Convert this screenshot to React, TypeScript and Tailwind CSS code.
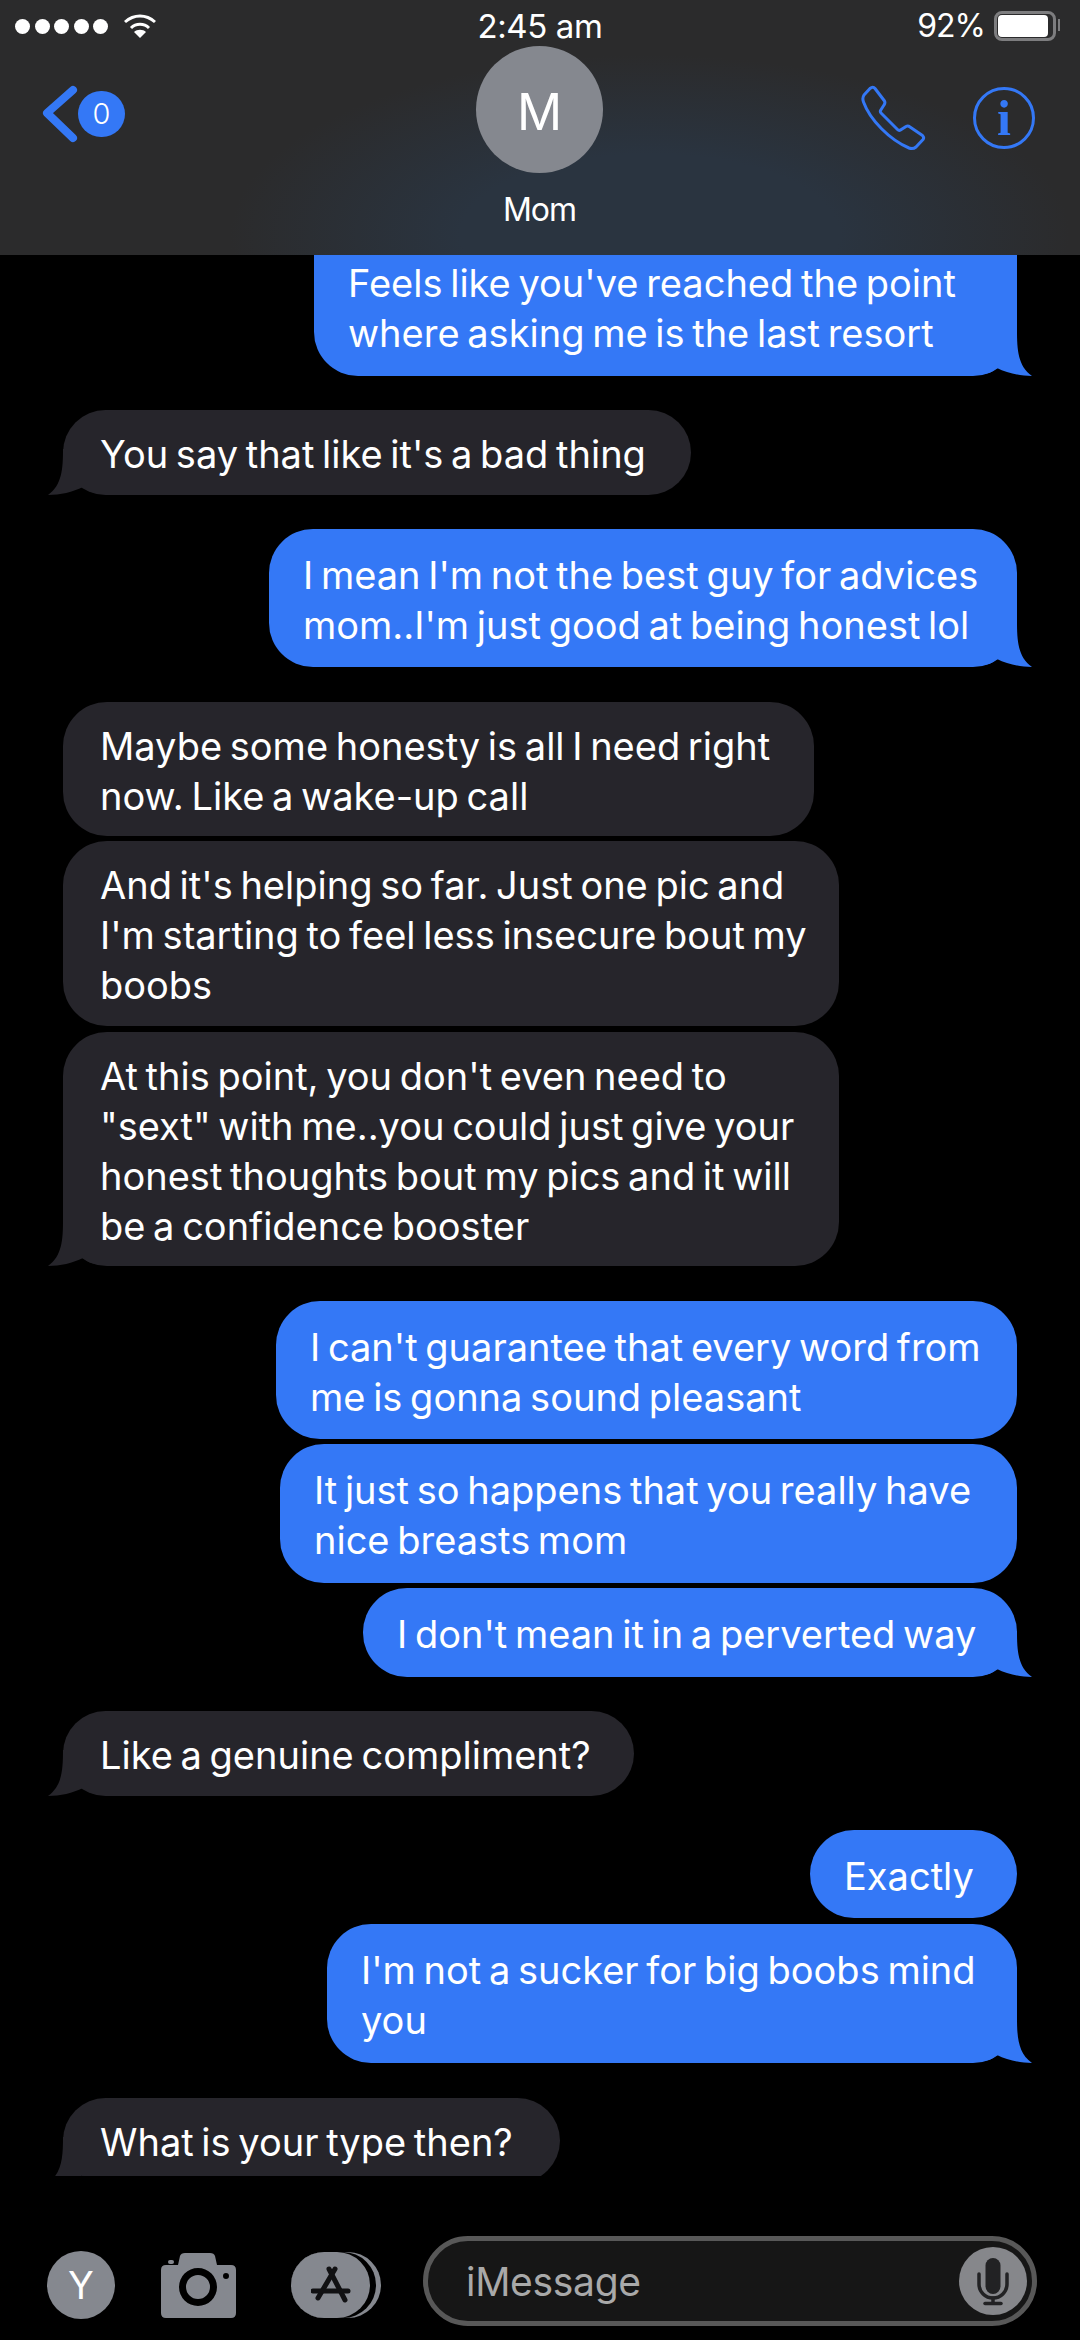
type Msg = { lines: string[]; box: string; sent?: boolean; tail?: boolean };

const messages: Msg[] = [
  { lines: ["", "Feels like you've reached the point", "where asking me is the last resort"], box: "w-[703px] h-[189px] -mt-[68px]", sent: true, tail: true },
  { lines: ["You say that like it's a bad thing"], box: "w-[628px] h-[85px] mt-[34px]", tail: true },
  { lines: ["I mean I'm not the best guy for advices", "mom..I'm just good at being honest lol"], box: "w-[748px] h-[138px] mt-[34px]", sent: true, tail: true },
  { lines: ["Maybe some honesty is all I need right", "now. Like a wake-up call"], box: "w-[751px] h-[134px] mt-[35px]" },
  { lines: ["And it's helping so far. Just one pic and", "I'm starting to feel less insecure bout my", "boobs"], box: "w-[776px] h-[185px] mt-[5px]" },
  { lines: ["At this point, you don't even need to", "\"sext\" with me..you could just give your", "honest thoughts bout my pics and it will", "be a confidence booster"], box: "w-[776px] h-[234px] mt-[6px]", tail: true },
  { lines: ["I can't guarantee that every word from", "me is gonna sound pleasant"], box: "w-[741px] h-[138px] mt-[35px]", sent: true },
  { lines: ["It just so happens that you really have", "nice breasts mom"], box: "w-[737px] h-[139px] mt-[5px]", sent: true },
  { lines: ["I don't mean it in a perverted way"], box: "w-[654px] h-[89px] mt-[5px]", sent: true, tail: true },
  { lines: ["Like a genuine compliment?"], box: "w-[571px] h-[85px] mt-[34px]", tail: true },
  { lines: ["Exactly"], box: "w-[207px] h-[88px] mt-[34px]", sent: true },
  { lines: ["I'm not a sucker for big boobs mind", "you"], box: "w-[690px] h-[139px] mt-[6px]", sent: true, tail: true },
  { lines: ["What is your type then?"], box: "w-[497px] h-[85px] mt-[35px]", tail: true },
];

function Tail({ sent }: { sent?: boolean }) {
  return (
    <svg
      viewBox="0 0 47 56"
      className={
        sent
          ? "absolute -right-[15px] bottom-0 w-[47px] h-[56px]"
          : "absolute -left-[15px] bottom-0 w-[47px] h-[56px] -scale-x-100"
      }
    >
      <path
        d="M32 10C32 30 33 46 47 56C35 56 22 53 12 48C9 51 5 53 0 54L0 10Z"
        fill={sent ? "#3478f6" : "#26252b"}
      />
    </svg>
  );
}

function Bubble({ msg }: { msg: Msg }) {
  return (
    <div
      className={`relative shrink-0 rounded-[44px] flex flex-col justify-center pt-[3px] ${msg.box} ${
        msg.sent ? "self-end bg-[#3478f6] pl-[34px]" : "self-start bg-[#26252b] pl-[37px]"
      }`}
    >
      {msg.tail && <Tail sent={msg.sent} />}
      {msg.lines.map((line) => (
        <div key={line} className="relative h-[50px] leading-[50px] whitespace-nowrap">
          {line}
        </div>
      ))}
    </div>
  );
}

export default function App() {
  return (
    <div className="w-[1080px] h-[2340px] bg-black text-white flex flex-col overflow-hidden font-['Inter','Liberation_Sans',sans-serif]">
      {/* Header */}
      <div className="relative h-[255px] shrink-0 bg-[radial-gradient(ellipse_420px_180px_at_650px_235px,#2a3440_0%,#2a3440_45%,#2b2b2c_100%)]">
        <div className="flex items-center h-[52px] pl-[15px] pr-[24px]">
          <div className="flex gap-[4.5px]">
            <span className="w-[15px] h-[15px] rounded-full bg-white" />
            <span className="w-[15px] h-[15px] rounded-full bg-white" />
            <span className="w-[15px] h-[15px] rounded-full bg-white" />
            <span className="w-[15px] h-[15px] rounded-full bg-white" />
            <span className="w-[15px] h-[15px] rounded-full bg-white" />
          </div>
          <svg viewBox="0 0 34 26" className="ml-[15px] w-[34px] h-[26px]" fill="none" stroke="#fff" strokeWidth="3">
            <path d="M2 9C11 1 23 1 32 9" />
            <path d="M8 15C13 10 21 10 26 15" />
            <path d="M17 25L11 19C14 16 20 16 23 19Z" fill="#fff" stroke="none" />
          </svg>
          <div className="ml-auto text-[32px] tracking-[-1px]">92%</div>
          <div className="relative ml-[9px] w-[62px] h-[30px] rounded-[8px] border-[3px] border-[#7d7d7f] p-[1px]">
            <div className="w-[50px] h-full rounded-[4px] bg-white" />
            <div className="absolute -right-[7px] top-[5px] w-[2px] h-[12px] bg-[#7d7d7f]" />
          </div>
        </div>
        <div className="absolute left-0 right-0 top-[6px] text-center text-[33px] tracking-[-0.4px] leading-[40px]">2:45 am</div>

        <div className="absolute left-[476px] top-[46px] flex flex-col items-center w-[127px]">
          <div className="w-[127px] h-[127px] pt-[5px] rounded-full bg-[#85888f] flex items-center justify-center text-[50px]">M</div>
          <div className="mt-[17px] text-[32px] leading-[40px] tracking-[-1px]">Mom</div>
        </div>

        <div className="absolute left-[42px] top-[84px] flex items-center">
          <svg viewBox="0 0 36 60" className="w-[36px] h-[60px]" fill="none" stroke="#3478f6" strokeWidth="8" strokeLinecap="round" strokeLinejoin="round">
            <path d="M31 6L5 29L31 54" />
          </svg>
          <div className="w-[47px] h-[46px] rounded-full bg-[#3478f6] flex items-center justify-center text-[29px] font-light">0</div>
        </div>

        <svg
          viewBox="0 0 66 66"
          className="absolute left-[860px] top-[85px] w-[66px] h-[66px]"
          fill="none"
          stroke="#3478f6"
          strokeWidth="3"
          strokeLinejoin="round"
        >
          <path d="M10 3.5Q13 1 15 3.5L24.5 16Q25.5 18 24 20L20.5 25.5Q20 27 21 28L37.5 44.5Q39 46 40.5 45L46 41.5Q48 40.5 50 42L62.5 50.5Q64.5 52.5 63 54.5L56 62Q53 64.5 49 63C30 55 10 35 3.5 17Q2 13 4 10Z" />
        </svg>
        <div className="absolute left-[973px] top-[87px] w-[62px] h-[62px] rounded-full border-[3px] border-[#3478f6] flex items-center justify-center text-[#3478f6] text-[50px] font-bold font-['Liberation_Serif',serif]">i</div>
      </div>

      {/* Messages */}
      <div className="h-[1921px] shrink-0 overflow-hidden flex flex-col pl-[63px] pr-[63px] text-[38px] [word-spacing:-3px]">
        {messages.map((m) => (
          <Bubble key={m.lines.join()} msg={m} />
        ))}
      </div>

      {/* Input bar */}
      <div className="relative flex items-center pl-[47px] pt-[54px] h-[164px]">
        <div className="w-[68px] h-[68px] rounded-full bg-[#85888f] flex items-center justify-center text-[38px]">Y</div>
        <svg viewBox="0 0 75 65" className="ml-[46px] w-[75px] h-[65px]">
          <path
            fillRule="evenodd"
            fill="#85888f"
            d="M5 12H17L19 3Q20 0 24 0H49Q53 0 54 3L56 12H70Q75 12 75 17V60Q75 65 70 65H5Q0 65 0 60V17Q0 12 5 12ZM37 15A19 19 0 1 0 37 53A19 19 0 1 0 37 15ZM37 22A12 12 0 1 1 37 46A12 12 0 1 1 37 22ZM65 20A3 3 0 1 0 65 26A3 3 0 1 0 65 20Z"
          />
          <rect x="7" y="7" width="6" height="4" rx="2" fill="#85888f" />
        </svg>
        <div className="relative ml-[55px] w-[90px] h-[66px]">
          <div className="absolute left-0 top-0 w-[90px] h-[66px] rounded-full bg-[#85888f]" />
          <div className="absolute left-0 top-0 w-[85px] h-[66px] rounded-full bg-black" />
          <div className="absolute left-0 top-0 w-[79px] h-[66px] rounded-full bg-[#85888f] flex items-center justify-center">
            <svg viewBox="0 0 40 38" className="w-[40px] h-[38px]" fill="none" stroke="#111113" strokeWidth="5" strokeLinecap="round">
              <path d="M18 3L34 34" />
              <path d="M24 3L7 32" />
              <path d="M2 25H37" />
            </svg>
          </div>
        </div>
        <div className="absolute left-[423px] top-[60px] w-[614px] h-[90px] pt-[3px] rounded-full border-[5px] border-[#585858] bg-[#161616] flex items-center pl-[38px] text-[39px] tracking-[-0.3px] text-[#a9a9a9]">
          iMessage
          <div className="absolute right-[5px] top-[6px] w-[68px] h-[68px] rounded-full bg-[#86878b]">
            <svg viewBox="0 0 68 68" className="w-[68px] h-[68px]" fill="none" stroke="#222224" strokeWidth="3.5" strokeLinecap="round">
              <rect x="26.5" y="11" width="15" height="36" rx="7.5" fill="#222224" stroke="none" />
              <path d="M20 27V37A14 14 0 0 0 48 37V27" />
              <path d="M34 51V56" />
              <path d="M26 56.5H42" />
            </svg>
          </div>
        </div>
      </div>
    </div>
  );
}
